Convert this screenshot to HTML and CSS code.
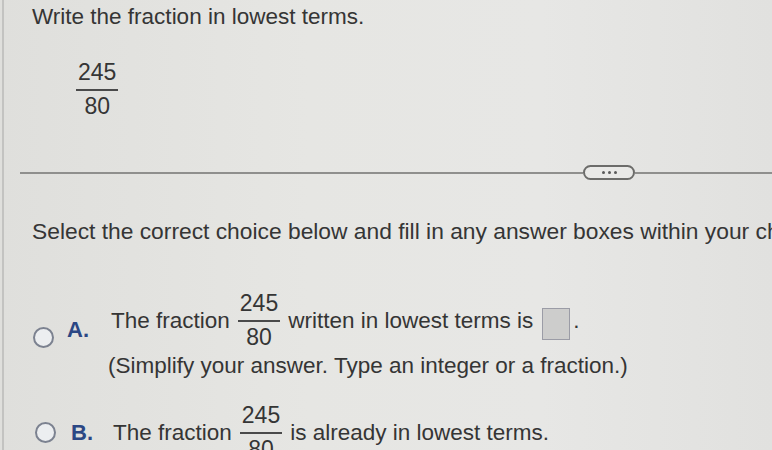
FILE: index.html
```html
<!DOCTYPE html>
<html>
<head>
<meta charset="utf-8">
<link rel="stylesheet" href="styles.css">
</head>
<body>
<div class="page">
  <div class="title">Write the fraction in lowest terms.</div>
  <div class="given">
    <span class="frac"><span class="num">245</span><span class="den">80</span></span>
  </div>
  <div class="divider">
    <div class="line short"></div>
    <div class="pill"><span></span><span></span><span></span></div>
    <div class="line"></div>
  </div>
  <div class="prompt">Select the correct choice below and fill in any answer boxes within your choice.</div>
  <div class="option opt-a">
    <span class="radio"></span>
    <span class="letter">A.</span>
    <div class="content">
      <div class="row"><span>The fraction</span><span class="frac"><span class="num">245</span><span class="den">80</span></span><span>written in lowest terms is</span><span class="box"></span><span class="dot">.</span></div>
      <div class="hint">(Simplify your answer. Type an integer or a fraction.)</div>
    </div>
  </div>
  <div class="option opt-b">
    <span class="radio"></span>
    <span class="letter">B.</span>
    <div class="row"><span>The fraction</span><span class="frac"><span class="num">245</span><span class="den">80</span></span><span>is already in lowest terms.</span></div>
  </div>
</div>
</body>
</html>
```
FILE: styles.css
```css
html, body {
  margin: 0;
  padding: 0;
  height: 100%;
  overflow: hidden;
}
body {
  background: linear-gradient(90deg, #dfdfdc 0%, #e6e6e3 40%, #e7e7e5 70%, #e1e1df 100%);
  font-family: "Liberation Sans", Arial, sans-serif;
  color: #353535;
}
.page {
  margin-left: 2px;
  border-left: 2px solid #c3c3c1;
  height: 100%;
  box-sizing: border-box;
  padding-top: 4px;
  white-space: nowrap;
  overflow: hidden;
  font-size: 22.5px;
  line-height: 26px;
}
.title {
  padding-left: 28px;
}
.given {
  padding-left: 72px;
  margin-top: 30px;
  display: flex;
}
.frac {
  display: inline-flex;
  flex-direction: column;
  align-items: stretch;
  text-align: center;
  font-size: 23px;
  line-height: 25px;
}
.frac .num {
  border-bottom: 2px solid #4a4a4a;
  padding: 0 2px 4px;
}
.frac .den {
  padding-top: 3px;
}
.divider {
  display: flex;
  align-items: center;
  margin-top: 46px;
  padding-left: 16px;
}
.line {
  flex: 1;
  height: 2px;
  background: #8f8f8d;
}
.line.short {
  flex: 0 0 563px;
}
.pill {
  width: 48px;
  height: 11px;
  border: 2px solid #6c6c6a;
  border-radius: 8px;
  display: flex;
  justify-content: center;
  align-items: center;
  gap: 3px;
  background: #e9e9e7;
}
.pill span {
  width: 3px;
  height: 3px;
  background: #5a5a5a;
  border-radius: 50%;
}
.prompt {
  font-size: 22.8px;
  padding-left: 28px;
  margin-top: 38px;
}
.option {
  display: flex;
  align-items: center;
}
.opt-a {
  margin-top: 47px;
  padding-left: 29px;
}
.radio {
  width: 17px;
  height: 17px;
  border: 2px solid #7c8290;
  border-radius: 50%;
  background: #eceef0;
  flex: none;
}
.letter {
  color: #2b4784;
  font-weight: bold;
  font-size: 22px;
  margin-left: 13px;
  width: 44px;
  flex: none;
}
.opt-a .radio {
  margin-top: 5px;
}
.opt-a .letter {
  margin-bottom: 11px;
}
.row {
  display: flex;
  align-items: center;
  gap: 8px;
}
.box {
  width: 26px;
  height: 30px;
  border: 1px solid #9b9ca6;
  background: #cdcdcc;
  margin-left: 1px;
  margin-top: 7px;
}
.dot {
  margin-left: -5px;
}
.hint {
  margin-top: 3px;
  margin-left: -3px;
}
.opt-b {
  margin-top: 24px;
  padding-left: 31px;
}
.opt-b .letter {
  margin-left: 15px;
  width: 42px;
}
```
